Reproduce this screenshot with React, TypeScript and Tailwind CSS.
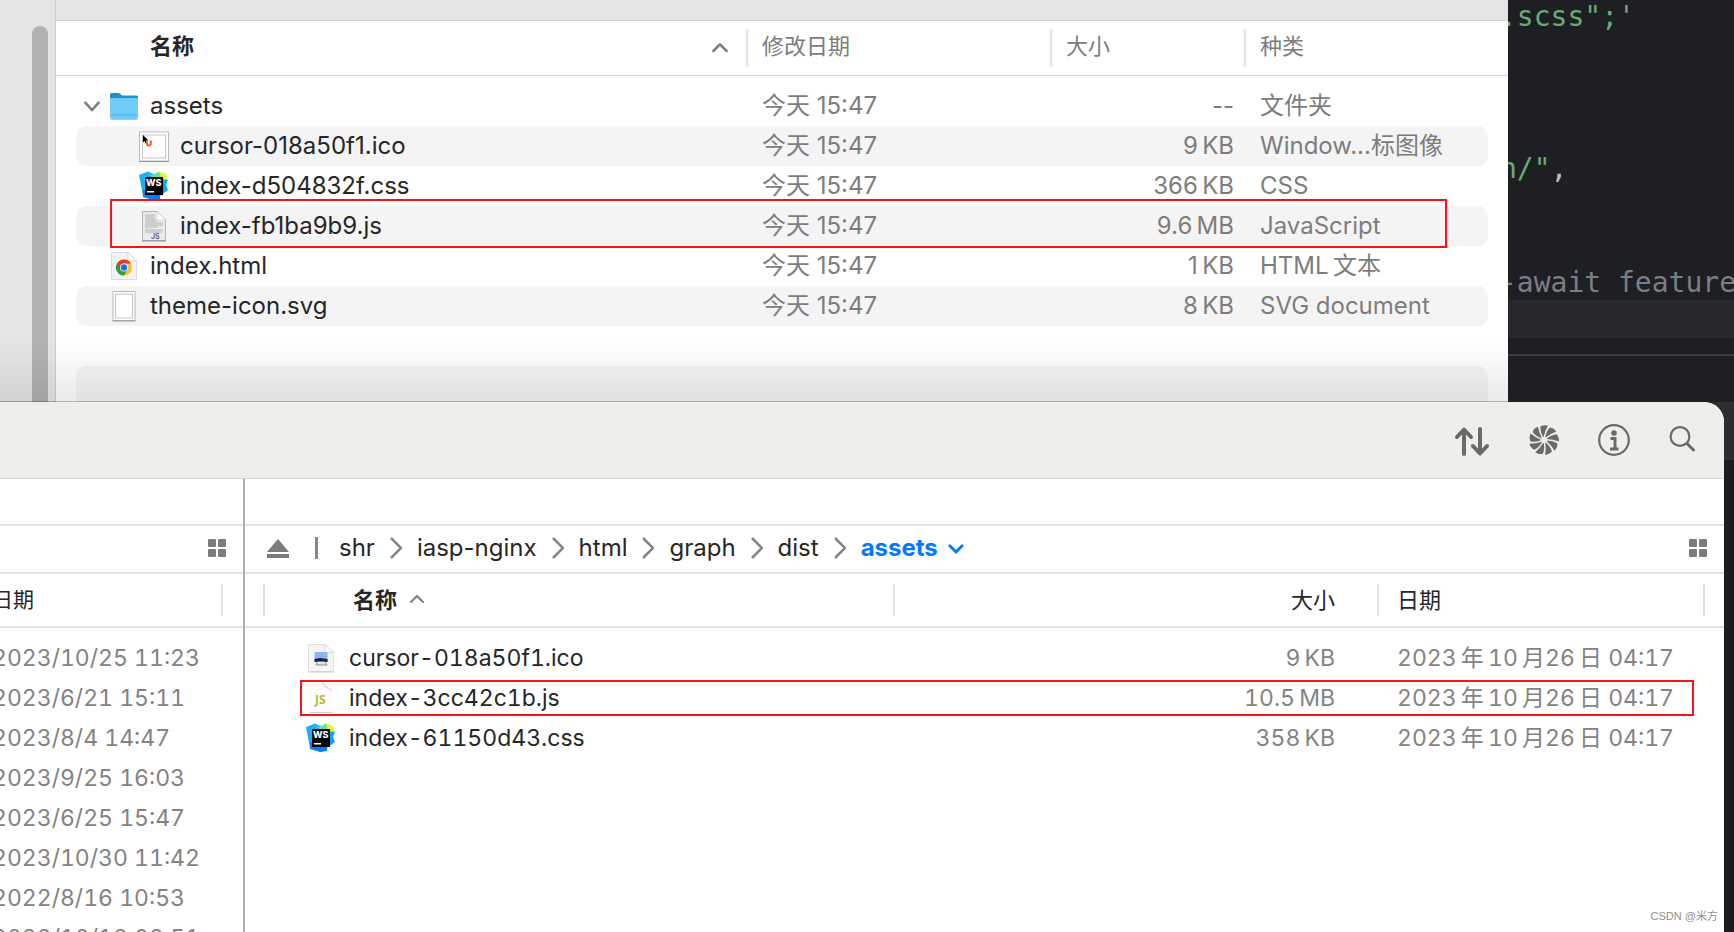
import React from 'react'

const localFiles = [
  { name: 'assets', icon: 'folder', size: '--', kind: '文件夹', open: true },
  { name: 'cursor-018a50f1.ico', icon: 'cursor', size: '9\u2009KB', kind: 'Window...标图像', child: true },
  { name: 'index-d504832f.css', icon: 'webstorm', size: '366\u2009KB', kind: 'CSS', child: true },
  { name: 'index-fb1ba9b9.js', icon: 'script', size: '9.6\u2009MB', kind: 'JavaScript', child: true, marked: true },
  { name: 'index.html', icon: 'chrome', size: '1\u2009KB', kind: 'HTML\u2009文本' },
  { name: 'theme-icon.svg', icon: 'blank', size: '8\u2009KB', kind: 'SVG document' },
]

const remoteFiles = [
  { name: 'cursor-018a50f1.ico', icon: 'image', size: '9\u2009KB' },
  { name: 'index-3cc42c1b.js', icon: 'js', size: '10.5\u2009MB', marked: true },
  { name: 'index-61150d43.css', icon: 'webstorm', size: '358\u2009KB' },
]

const dates = [
  '2023/10/25 11:23',
  '2023/6/21 15:11',
  '2023/8/4 14:47',
  '2023/9/25 16:03',
  '2023/6/25 15:47',
  '2023/10/30 11:42',
  '2022/8/16 10:53',
  '2022/10/18 08:51',
]

const path = ['shr', 'iasp-nginx', 'html', 'graph', 'dist']

function FileIcon({ type }: { type: string }) {
  return (
    <svg viewBox="0 0 32 32" className="w-8 h-8 shrink-0">
      {type === 'folder' && (
        <>
          <path d="M2 4.500Q2 3 3.500 3H10Q11.500 3 12.500 4L14 5.500H28.500Q30 5.500 30 7V28H2Z" fill="#1b93cf" />
          <path d="M2 9Q2 8 3 8H29Q30 8 30 9V27.500Q30 29 28.500 29H3.500Q2 29 2 27.500Z" fill="#6fcbf8" />
          <path d="M2 25H30" stroke="#4fb2e4" />
          <path d="M3 29.500H29" stroke="#8a9aa5" strokeOpacity="0.6" />
        </>
      )}
      {type === 'cursor' && (
        <>
          <rect x="1.500" y="2" width="29" height="29" fill="#fff" stroke="#bdbdbd" />
          <path d="M1 31.500H31" stroke="#999" />
          <rect x="4.500" y="5" width="23" height="23" fill="none" stroke="#c4c4c4" />
          <path d="M5 5L10.500 10.500L8 10.500L9 13L7.500 13.500L6.500 11L5 12.500Z" fill="#000" />
          <path d="M9 10.500V13.500Q9 15.500 10.800 15.500Q12.800 15.500 12.800 13.500V10.500" fill="none" stroke="#f4641f" strokeWidth="2" />
        </>
      )}
      {type === 'webstorm' && (
        <>
          <path d="M1 5L10 1.500L17 5L15 29L5 26Z" fill="#12b4f5" />
          <path d="M5 20L22 20L22 29L15 30L5 27Z" fill="#087cfa" />
          <path d="M9 4L16 6L21 1.500L28 4L30 10L24 10Z" fill="#e9f046" />
          <path d="M14 5L21 1.500L23 8L14 8Z" fill="#6fe08c" />
          <path d="M22 9L30 10L28 15L30 20L22 26Z" fill="#08a6f8" />
          <rect x="7" y="7" width="18" height="18" fill="#000" />
          <text x="8" y="16" fontSize="9" fontWeight="800" fill="#fff" fontFamily="Inter, sans-serif">WS</text>
          <rect x="9" y="21" width="7" height="1.500" fill="#fff" />
        </>
      )}
      {type === 'script' && (
        <>
          <path d="M4.500 1.500H19L27.500 10V30.500H4.500Z" fill="#ebebeb" stroke="#b5b5b5" />
          <path d="M4 31H28" stroke="#8b8b8b" />
          <path d="M19 1.500V10H27.500Z" fill="#fff" stroke="#c2c2c2" strokeWidth="0.600" />
          <path d="M7 5H17M7 7H17M7 9H17M7 11H19M7 13H25M7 15H25M7 17H20M7 20H25M7 22H24" stroke="#b1b1b1" />
          <text x="13" y="29" fontSize="7" fontWeight="600" fill="#555" fontFamily="Inter, sans-serif">JS</text>
        </>
      )}
      {type === 'chrome' && (
        <>
          <path d="M3.500 2.500H20L28.500 11V29.500H3.500Z" fill="#f3f3f3" stroke="#dcdcdc" />
          <path d="M20 2.500V11H28.500Z" fill="#fff" stroke="#cdcdcd" strokeWidth="0.800" />
          <circle cx="16" cy="17.500" r="8" fill="#fbc02d" />
          <path d="M9.070 13.500A8 8 0 0 0 16 25.500L19.500 19.500L16 17.500Z" fill="#2f9e4b" />
          <path d="M16 13.500H22.930A8 8 0 0 0 9.070 13.500L12.500 19.500Z" fill="#e33b2e" />
          <circle cx="16" cy="17.500" r="4" fill="#fff" />
          <circle cx="16" cy="17.500" r="3.200" fill="#1a73e8" />
        </>
      )}
      {type === 'blank' && (
        <>
          <rect x="5" y="1.500" width="22" height="29" fill="#fff" stroke="#b8b8b8" />
          <path d="M4.500 31H27.500" stroke="#999" />
          <rect x="7.500" y="4" width="17" height="24" fill="none" stroke="#c4c4c4" />
        </>
      )}
      {type === 'image' && (
        <>
          <path d="M3.500 2.500H20L28.500 10.500V29.500H3.500Z" fill="#f5f5f5" stroke="#e0e0e0" />
          <path d="M3.500 30H28.500" stroke="#c9c9c9" />
          <path d="M20 2.500V10.500H28.500Z" fill="#fff" stroke="#d0d0d0" strokeWidth="0.800" />
          <rect x="9.500" y="10" width="13" height="10" fill="#8fb7ee" />
          <path d="M9.500 17L15 16L22.500 17V20H9.500Z" fill="#17233d" />
          <path d="M11 23L12.500 19.500H20L22 23Z" fill="#dfe4ea" stroke="#707780" strokeWidth="0.800" />
        </>
      )}
      {type === 'js' && (
        <>
          <path d="M4 1.500H19L28 10V29H4Z" fill="#fcfcfc" />
          <path d="M17 1.500Q20 2 20.500 5Q25 6 27 9" fill="none" stroke="#d4d4d4" strokeWidth="1.200" />
          <path d="M5 30.500H27" stroke="#d0d0d0" />
          <text x="10" y="22" fontSize="12" fontWeight="700" fill="#b9b92f" fontFamily="Open Sans, sans-serif">JS</text>
        </>
      )}
    </svg>
  )
}

function Chevron({ className, d }: { className: string; d: string }) {
  return (
    <svg viewBox="0 0 24 24" fill="none" stroke="currentColor" strokeWidth="3" strokeLinecap="round" strokeLinejoin="round" className={className}>
      <path d={d} />
    </svg>
  )
}

function GridIcon() {
  return (
    <svg viewBox="0 0 18 18" fill="#7c7c7c" className="w-[18px] h-[18px]">
      <rect width="8" height="8" rx="1" />
      <rect x="10" width="8" height="8" rx="1" />
      <rect y="10" width="8" height="8" rx="1" />
      <rect x="10" y="10" width="8" height="8" rx="1" />
    </svg>
  )
}

function Finder() {
  return (
    <div className="relative flex flex-1 min-w-0">
      <div className="flex w-14 shrink-0 justify-end border-r border-[#cdcccb] bg-[#e6e5e4] pt-[26px] pr-[7px]">
        <div className="w-4 rounded-t-full bg-[#b3b1b2]"></div>
      </div>
      <div className="flex-1 min-w-0 bg-white">
        <div className="h-[21px] border-b border-[#d3d2d1] bg-[#e6e5e4]"></div>
        <table className="w-full table-fixed text-left text-[#7d7d7d]">
          <thead className="text-[22px] leading-[34px]">
            <tr className="h-[54px] border-b border-[#d9d9d9]">
              <th className="p-0 pb-1">
                <div className="flex items-center justify-between pl-[94px] pr-4">
                  <span className="font-bold text-[#262626]">名称</span>
                  <Chevron className="w-5 h-5" d="M4 18L12 10L20 18" />
                </div>
              </th>
              <th className="w-[304px] p-0 font-normal">
                <div className="h-[38px] border-l-2 border-[#e3e3e3] pl-3.5">修改日期</div>
              </th>
              <th className="w-[194px] p-0 font-normal">
                <div className="h-[38px] border-l-2 border-[#e3e3e3] pl-3.5">大小</div>
              </th>
              <th className="w-[264px] p-0 font-normal">
                <div className="h-[38px] border-l-2 border-[#e3e3e3] pl-3.5">种类</div>
              </th>
            </tr>
          </thead>
          <tbody className="text-[24px] leading-10">
            <tr className="h-[11px]"></tr>
            {localFiles.map((file, i) => {
              const bg = i % 2 ? 'bg-[#f4f4f4]' : ''
              return (
                <tr key={file.name} className="relative">
                  <td className="p-0 pl-5">
                    <div className={`flex h-10 items-center rounded-l-[10px] text-[#262626] ${file.child ? 'pl-[62px]' : 'pl-1.5'} ${bg}`}>
                      {!file.child && (
                        <span className="w-[26px] shrink-0 text-[#7d7d7d]">
                          {file.open && <Chevron className="w-5 h-5" d="M4 8L12 17L20 8" />}
                        </span>
                      )}
                      <FileIcon type={file.icon} />
                      <span className="pl-2.5 whitespace-nowrap">{file.name}</span>
                    </div>
                    {file.marked && <div className="absolute left-[54px] right-[61px] -top-[7px] -bottom-[2px] border-2 border-[#f81414]"></div>}
                  </td>
                  <td className="p-0">
                    <div className={`h-10 pl-4 ${bg}`}>今天 15:47</div>
                  </td>
                  <td className="p-0">
                    <div className={`h-10 pr-2.5 text-right ${bg}`}>{file.size}</div>
                  </td>
                  <td className="p-0 pr-5">
                    <div className={`h-10 rounded-r-[10px] pl-4 whitespace-nowrap ${bg}`}>{file.kind}</div>
                  </td>
                </tr>
              )
            })}
          </tbody>
        </table>
        <div className="mt-10 mx-5 h-9 rounded-t-[10px] bg-[#f4f4f4]"></div>
      </div>
      <div className="absolute inset-x-0 bottom-0 h-16 border-b border-black/30 bg-linear-to-b from-transparent to-black/8"></div>
    </div>
  )
}

function Editor() {
  return (
    <div className="w-[226px] shrink-0 overflow-hidden bg-[#1e1f22]">
      <pre className="-mt-0.5 -ml-2 h-0 font-['DejaVu_Sans_Mono',monospace] text-[28px] leading-[38px] text-[#bcbec4]">
        <div className="h-[152px] text-[#6aab73]">.scss";'</div>
        <div className="h-[114px]"><span className="text-[#6aab73]">h/"</span>,</div>
        <div className="h-9 text-[#7a7e85]">-await feature</div>
        <div className="h-[54px] border-b-[16px] border-[#1e1f22] bg-[#26282e]"></div>
        <div className="h-[2px] bg-[#393b40]"></div>
      </pre>
    </div>
  )
}

function Toolbar() {
  return (
    <div className="flex h-[77px] items-center justify-end gap-[38px] border-b border-[#d4d4d3] bg-[#efeeea] pr-7 text-[#6b6a68]">
      <button aria-label="Transfers">
        <svg viewBox="0 0 36 32" fill="none" stroke="currentColor" strokeWidth="4" strokeLinecap="round" strokeLinejoin="round" className="w-9 h-8">
          <path d="M10 30V6M3 13L10 5.500L17 13M26 5V29M19 22L26 29.500L33 22" />
        </svg>
      </button>
      <button aria-label="Activity">
        <svg viewBox="-16 -16 32 32" fill="currentColor" className="w-8 h-8">
          {[0, 40, 80, 120, 160, 200, 240, 280, 320].map((angle) => (
            <path key={angle} transform={`rotate(${angle})`} d="M-0.500 -2.500C-2.200 -5 -4 -9 -3.600 -13.400Q0 -15.600 4 -14.400Q1.200 -9.500 -0.500 -2.500Z" />
          ))}
        </svg>
      </button>
      <button aria-label="Info">
        <svg viewBox="0 0 32 32" fill="none" stroke="currentColor" strokeWidth="2.200" className="w-8 h-8">
          <circle cx="16" cy="16" r="14.800" />
          <circle cx="16" cy="9" r="2.800" fill="currentColor" stroke="none" />
          <path d="M12.500 14.500H17V25M12 25H20.500" strokeWidth="3" />
        </svg>
      </button>
      <button aria-label="Search">
        <svg viewBox="0 0 28 32" fill="none" stroke="currentColor" strokeWidth="2.200" strokeLinecap="round" className="w-7 h-8">
          <circle cx="12" cy="12.500" r="9.400" />
          <path d="M19 19.500L25.500 26" strokeWidth="3" />
        </svg>
      </button>
    </div>
  )
}

function LeftPane() {
  return (
    <div className="w-[245px] shrink-0 overflow-hidden border-r-2 border-[#b0b0b0]">
      <div className="h-[47px] border-b-2 border-[#e3e3e3]"></div>
      <div className="flex h-12 items-center justify-end border-b-2 border-[#e3e3e3] pr-[17px] pb-0.5">
        <button aria-label="View options"><GridIcon /></button>
      </div>
      <table className="w-full text-left whitespace-nowrap">
        <thead className="text-[21px] leading-8">
          <tr className="h-[53px] border-b-2 border-[#e3e3e3]">
            <th className="p-0 pr-5 font-normal text-[#262626]">
              <div className="-ml-2 border-r-2 border-[#e3e3e3]">日期</div>
            </th>
          </tr>
        </thead>
        <tbody className="text-[23px] leading-10 text-[#838383] tabular-nums">
          <tr className="h-[11px]"></tr>
          {dates.map((date) => (
            <tr key={date}>
              <td className="p-0"><div className="-ml-2">{date}</div></td>
            </tr>
          ))}
        </tbody>
      </table>
    </div>
  )
}

function RightPane() {
  return (
    <div className="flex-1 min-w-0">
      <div className="h-[47px] border-b-2 border-[#e3e3e3]"></div>
      <nav className="flex h-12 items-center border-b-2 border-[#e3e3e3] pl-[22px] pr-[17px] pb-0.5 text-[24px] text-[#262626]">
        <button aria-label="Eject">
          <svg viewBox="0 0 22 20" fill="#7c7c7c" className="w-[22px] h-5">
            <path d="M11 1L22 14H0Z" />
            <rect y="16" width="22" height="4" />
          </svg>
        </button>
        <div className="ml-[26px] mr-[21px] h-[22px] w-[3px] bg-[#868686]"></div>
        {path.map((part) => (
          <React.Fragment key={part}>
            <a href="#">{part}</a>
            <svg viewBox="0 0 12 22" fill="none" stroke="#868686" strokeWidth="2.500" className="mx-[15px] h-[22px] w-3">
              <path d="M1 1L11 11L1 21" />
            </svg>
          </React.Fragment>
        ))}
        <button className="flex items-center gap-2.5 font-bold text-[#007aff]">
          assets
          <svg viewBox="0 0 16 12" fill="none" stroke="currentColor" strokeWidth="3" className="mt-0.5 w-4 h-3">
            <path d="M1 2L8 9L15 2" />
          </svg>
        </button>
        <button aria-label="View options" className="ml-auto"><GridIcon /></button>
      </nav>
      <table className="w-full table-fixed text-left">
        <thead className="text-[22px] leading-8 text-[#262626]">
          <tr className="h-[53px] border-b-2 border-[#e3e3e3]">
            <th className="p-0 pl-[18px]">
              <div className="flex items-center gap-3 border-x-2 border-[#e3e3e3] pl-[88px]">
                名称
                <Chevron className="w-4 h-4 text-[#7d7d7d]" d="M3 15L12 6L21 15" />
              </div>
            </th>
            <th className="w-[482px] p-0 pr-10.5 text-right font-normal">大小</th>
            <th className="w-[328px] p-0 font-normal">
              <div className="border-x-2 border-[#e3e3e3] pl-[18px]">日期</div>
            </th>
            <th className="w-[19px] p-0"></th>
          </tr>
        </thead>
        <tbody className="text-[23px] leading-10 text-[#838383] tabular-nums">
          <tr className="h-[11px]"></tr>
          {remoteFiles.map((file) => (
            <tr key={file.name} className="relative">
              <td className="p-0 pl-[60px]">
                <div className="flex h-10 items-center gap-3 text-[#262626]">
                  <FileIcon type={file.icon} />
                  {file.name}
                </div>
                {file.marked && <div className="absolute left-[55px] right-[30px] inset-y-0.5 border-2 border-[#f81414]"></div>}
              </td>
              <td className="p-0 pr-10.5 text-right">{file.size}</td>
              <td className="p-0 pl-5 whitespace-nowrap">{'2023\u2009年\u200910\u2009月26\u2009日 04:17'}</td>
              <td className="p-0"></td>
            </tr>
          ))}
        </tbody>
      </table>
    </div>
  )
}

export default function App() {
  return (
    <div className="flex h-screen flex-col overflow-hidden bg-[#1e1f22] font-['Inter','Noto_Sans_CJK_SC',sans-serif] antialiased">
      <div className="flex shrink-0">
        <Finder />
        <Editor />
      </div>
      <div className="flex min-h-0 flex-1 flex-col bg-[linear-gradient(#2b2d30_58px,#1b1c1f_58px)] pr-2.5">
        <div className="relative flex min-h-0 flex-1 flex-col overflow-hidden rounded-tr-[20px] bg-white">
          <Toolbar />
          <div className="flex min-h-0 flex-1">
            <LeftPane />
            <RightPane />
          </div>
          <p className="absolute bottom-2 right-1.5 font-['Liberation_Sans','Noto_Sans_CJK_SC',sans-serif] text-[11px] leading-4 text-[#909090]">CSDN @米方</p>
        </div>
      </div>
    </div>
  )
}
